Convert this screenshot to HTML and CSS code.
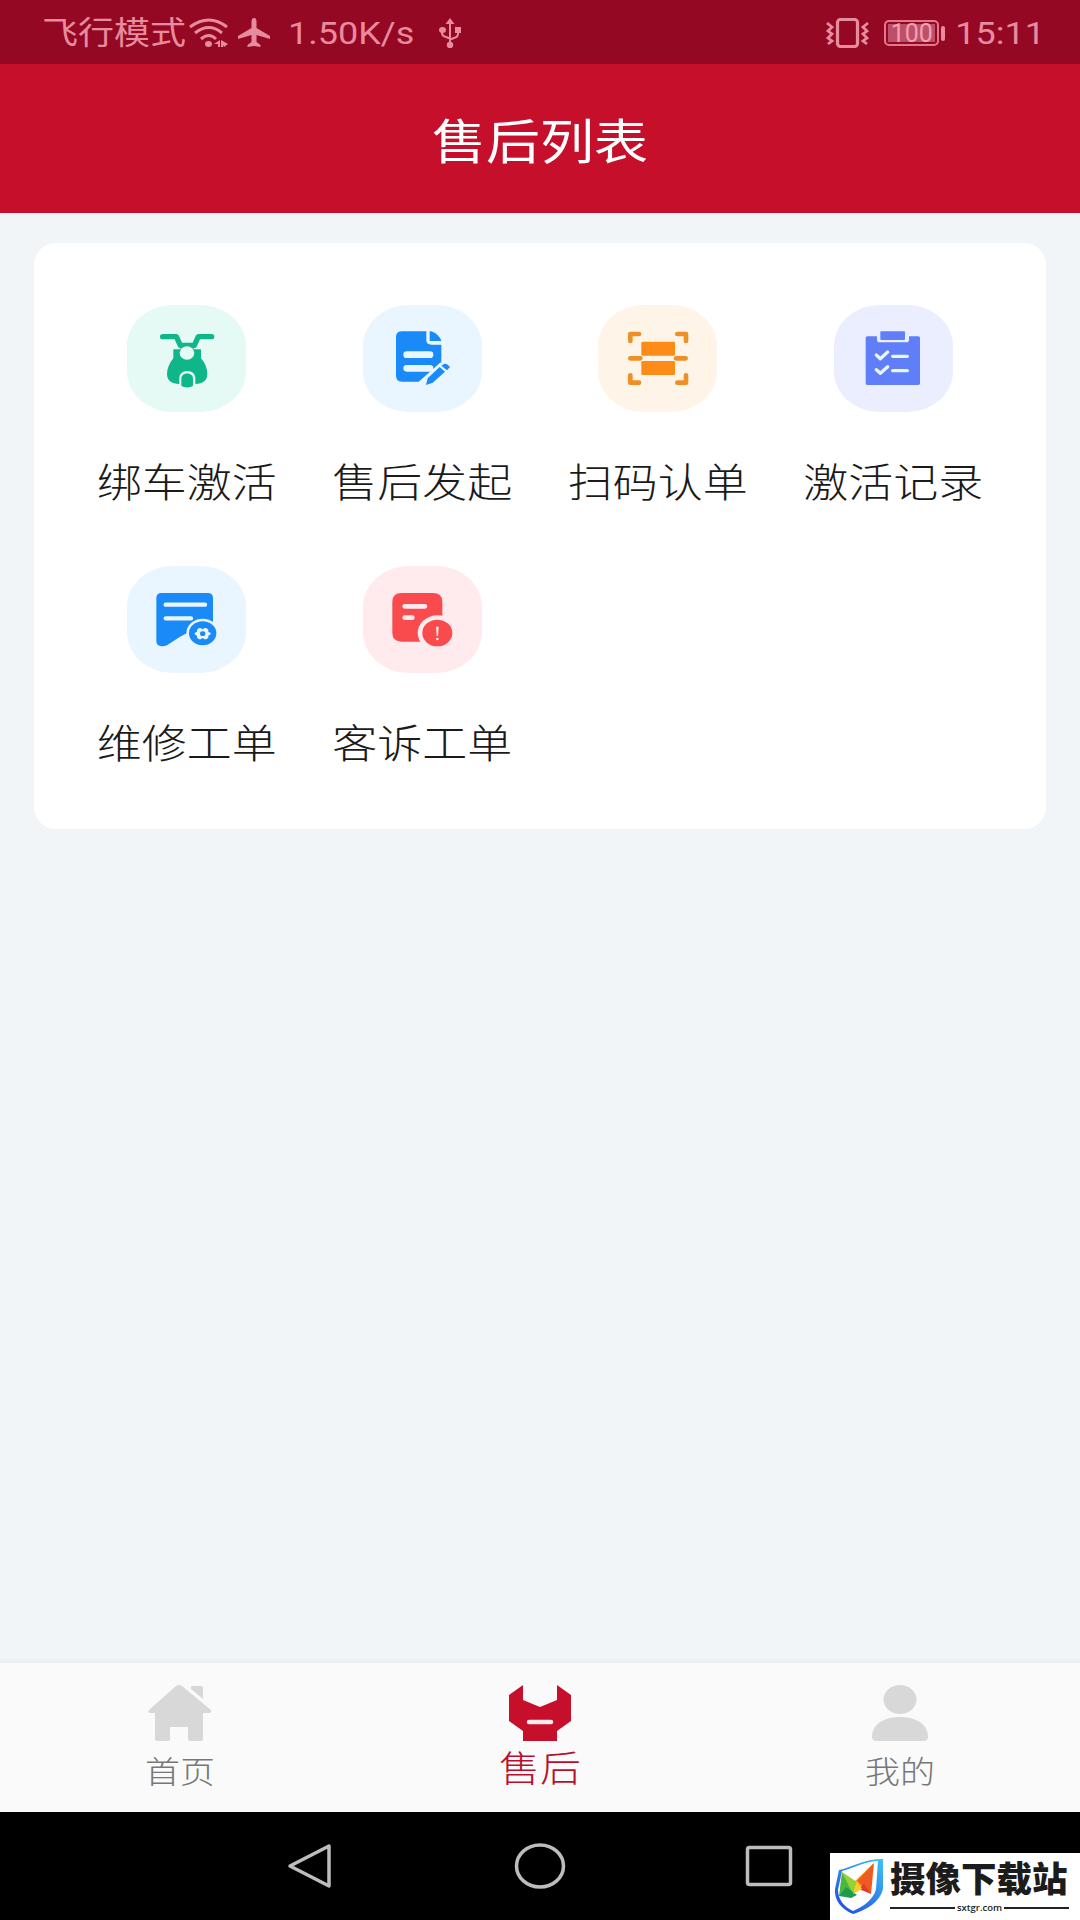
FILE: index.html
```html
<!DOCTYPE html>
<html lang="zh-CN">
<head>
    <meta charset="UTF-8">
    <meta name="viewport" content="width=device-width, initial-scale=1.0">
    <title>售后列表</title>
    <link rel="stylesheet" href="styles.css">
</head>
<body>
    <div class="status-bar">
        <div class="status-left">
            <span class="text">飞行模式</span>
            <svg class="wifi" viewBox="0 0 40 30">
                <g fill="none" stroke="currentColor" stroke-width="3">
                    <path d="M1 9Q20-5 38 9"/>
                    <path d="M6 15Q20 4 33 15"/>
                    <path d="M12 21Q20 14 27 21"/>
                </g>
                <ellipse cx="19.500" cy="26" rx="3.500" ry="3"/>
                <path d="M25 26l6-4v7h-2v-3zM32 22l7 4-4 3v-2l-1 2h-2z"/>
            </svg>
            <svg class="plane" viewBox="0 0 34 30">
                <path d="M17 0c2 0 2.500 2 2.500 4v6L33 18v3l-13.500-4v7l4 3v2L17 28l-6.500 1v-2l4-3v-7L1 21v-3l13.500-8V4c0-2 .5-4 2.500-4z"/>
            </svg>
            <span class="text speed">1.50K/s</span>
            <svg class="usb" viewBox="0 0 24 30">
                <path d="M12 0l4.500 6h-9zM1 12a3.500 3 0 1 1 7 0 3.500 3 0 1 1-7 0zM17 9h6v6h-6z"/>
                <circle cx="12" cy="27" r="3.200"/>
                <path d="M12 4v22M4 12v3q0 3 4 4l4 1.500M20 13v3q0 3-4 4l-4 1.500" fill="none" stroke="currentColor" stroke-width="2"/>
            </svg>
        </div>
        <div class="status-right">
            <svg class="vibrate" viewBox="0 0 44 30">
                <rect x="11.500" y="1.500" width="20" height="27" rx="3" fill="none" stroke="currentColor" stroke-width="3.200"/>
                <path d="M1 5l5 4-4 4 4 3-4 4 4 3-4 3M42 5l-5 4 4 4-4 3 4 4-4 3 4 3" fill="none" stroke="currentColor" stroke-width="2.800"/>
            </svg>
            <div class="battery"><span>100</span></div>
            <span class="text">15:11</span>
        </div>
    </div>

    <header class="header">
        <h1 class="text">售后列表</h1>
    </header>

    <main class="main">
        <div class="card">
            <a class="item">
                <svg class="icon green" viewBox="140 45 357 321">
                    <path d="M247 140h41l12 26h42l12-26h40" fill="none" stroke="#0fb68a" stroke-width="16" stroke-linecap="round" stroke-linejoin="round"/>
                    <path d="M279 178h20l10-15h23l10 15h20v27c12 14 19 30 19 47 0 20-14 29-36 30v-18c0-28-48-28-48 0v18c-23-1-37-10-37-30 0-17 8-33 19-47z" fill="#0fb68a"/>
                    <ellipse cx="320" cy="189" rx="22" ry="20" fill="#e5f9f5"/>
                    <path d="M303 266c0-21 35-21 35 0v20c-6 9-29 9-35 0z" fill="#0fb68a"/>
                </svg>
                <span class="text">绑车激活</span>
            </a>
            <a class="item">
                <svg class="icon blue" viewBox="128 45 357 321">
                    <path d="M245 124h73v26q0 14 15 14h30v62l-64 49h-54q-18 0-18-17V141q0-17 18-17z" fill="#1a8af8"/>
                    <path d="M328 124q14 1 24 12 10 9 11 17h-35z" fill="#1a8af8"/>
                    <path d="M259 194h70M259 235h70" stroke="#e9f5ff" stroke-width="20" stroke-linecap="round"/>
                    <path d="M300 281l66-59" stroke="#e9f5ff" stroke-width="15"/>
                    <path d="M317 285l5-20 36-34 16 14-37 33zM363 227l9-6q9-1 17 10l-9 10z" fill="#1a8af8"/>
                </svg>
                <span class="text">售后发起</span>
            </a>
            <a class="item">
                <svg class="icon orange" viewBox="113 45 357 321">
                    <path d="M210 153v-21h26M351 132h26v21M210 256v22h26M351 278h26v-22" fill="none" stroke="#ee9027" stroke-width="14" stroke-linecap="round" stroke-linejoin="round"/>
                    <path d="M210 205h30M347 205h29" stroke="#ee9027" stroke-width="14" stroke-linecap="round"/>
                    <rect x="243" y="155" width="101" height="42" rx="4" fill="#fd8b17"/>
                    <rect x="243" y="213" width="101" height="42" rx="4" fill="#fd8b17"/>
                </svg>
                <span class="text">扫码认单</span>
            </a>
            <a class="item">
                <svg class="icon purple" viewBox="132 45 357 321">
                    <path d="M232 139h29v10q0 8 8 8h80q8 0 8-8v-10h28q5 0 5 5v136q0 5-5 5H232q-5 0-5-5V144q0-5 5-5z" fill="#5f7ef7"/>
                    <rect x="271" y="124" width="74" height="26" rx="3" fill="#5f7ef7"/>
                    <path d="M259 195l12 11 22-20M259 239l12 11 22-20M308 199h44M308 242h44" fill="none" stroke="#e9f5ff" stroke-width="10" stroke-linecap="round" stroke-linejoin="round"/>
                </svg>
                <span class="text">激活记录</span>
            </a>
            <a class="item">
                <svg class="icon blue" viewBox="142 47 357 321">
                    <path d="M246 128h138q16 0 16 15v103h-64q-22 4-36 14l-38 25q-15 6-26 0-6-4-6-12V143q0-15 16-15z" fill="#1a8af8"/>
                    <path d="M258 163h118M258 204h76" stroke="#e9f5ff" stroke-width="13" stroke-linecap="round"/>
                    <ellipse cx="369" cy="249" rx="49" ry="44" fill="#e9f5ff"/>
                    <ellipse cx="369" cy="249" rx="41" ry="36" fill="#1a8af8"/>
                    <path d="M358 233h5l6 4 6-4h5l6 5v6l7 4v4l-7 4v6l-6 5h-5l-6-4-6 4h-5l-6-5v-6l-7-4v-4l7-4v-6z" fill="#e9f5ff"/>
                    <ellipse cx="369" cy="250" rx="8" ry="7" fill="#1a8af8"/>
                </svg>
                <span class="text">维修工单</span>
            </a>
            <a class="item">
                <svg class="icon red" viewBox="850 47 357 321">
                    <path d="M966 128h94q28 0 28 26v90l-45 30h-77q-28 0-28-26v-94q0-26 28-26z" fill="#f94a4d"/>
                    <path d="M975 168h61M975 202h23" stroke="#ffebed" stroke-width="14" stroke-linecap="round"/>
                    <ellipse cx="1073" cy="248" rx="59" ry="53" fill="#ffebed"/>
                    <ellipse cx="1073" cy="248" rx="45" ry="40" fill="#f94a4d"/>
                    <path d="M1069 229h8l-2 28h-4z" fill="#ffebed"/>
                    <ellipse cx="1073" cy="266" rx="4" ry="4" fill="#ffebed"/>
                </svg>
                <span class="text">客诉工单</span>
            </a>
        </div>
    </main>

    <nav class="tab-bar">
        <a class="tab">
            <svg class="tab-icon" viewBox="0 0 64 56">
                <path d="M28 1q3-2 6 0l29 24q1 3-2 3h-6v26q0 2-2 2H42q-2 0-2-2V42H22v12q0 2-2 2H9q-2 0-2-2V28H2q-3 0-1-3z"/>
                <path d="M43 1h10q2 0 2 2v11L43 4z"/>
            </svg>
            <span class="text">首页</span>
        </a>
        <a class="tab active">
            <svg class="tab-icon" viewBox="0 0 64 56">
                <path d="M15 0v15l17 7 17-7V0l14 10v26L49 46v10H15V46L1 36V10z"/>
                <path d="M21 37h22" stroke="#fde8ec" stroke-width="4.500" stroke-linecap="round"/>
            </svg>
            <span class="text">售后</span>
        </a>
        <a class="tab">
            <svg class="tab-icon" viewBox="0 0 64 56">
                <ellipse cx="32" cy="14.500" rx="16.500" ry="14.500"/>
                <path d="M4 52C4 39 16 32 32 32s28 7 28 20q0 4-5 4H9q-5 0-5-4z"/>
            </svg>
            <span class="text">我的</span>
        </a>
    </nav>

    <div class="system-nav">
        <svg viewBox="0 0 48 48"><path d="M3 24L42 4v40z"/></svg>
        <svg viewBox="0 0 52 48"><ellipse cx="26" cy="24" rx="23.500" ry="21"/></svg>
        <svg viewBox="0 0 48 48"><rect x="2.500" y="5.500" width="43" height="37" rx="2"/></svg>
    </div>

    <div class="watermark">
        <svg class="shield" viewBox="0 0 50 58">
            <defs>
                <linearGradient id="shield" x1="1" y1="0" x2=".3" y2="1">
                    <stop offset="0" stop-color="#3cc4f4"/>
                    <stop offset="1" stop-color="#2452e8"/>
                </linearGradient>
            </defs>
            <path fill="url(#shield)" fill-rule="evenodd" d="M49 1v29C47 43 33 52 19 56 7 51 0 42 1 31L5 12C19 9 29 1 49 1zM44 3C29 4 20 10 8 13L4 32c0 9 6 17 15 21 10-4 21-12 23-22z"/>
            <path d="M8 14l15 10-4 14z" fill="#95d137"/>
            <path d="M8 14L5 38l14-2z" fill="#49b83d"/>
            <path d="M5 38l7-9 11 8-6 3z" fill="#1d9c50"/>
            <path d="M40 5L21 23l7 10z" fill="#f9a020"/>
            <path d="M40 5l-3 31-14-13z" fill="#ed5a22"/>
            <path d="M37 36l-12-5 5-5z" fill="#e33b26"/>
            <path d="M23 23l-4 13 9-5z" fill="#f8cc2b"/>
        </svg>
        <div class="brand">
            <div class="brand-name">摄像下载站</div>
            <div class="brand-url">sxtgr.com</div>
        </div>
    </div>
</body>
</html>
```

FILE: styles.css
```css
* {
    box-sizing: border-box;
}

body {
    margin: 0;
    height: 1920px;
    display: flex;
    flex-direction: column;
    position: relative;
    overflow: hidden;
    background: #f1f5f8;
    font-family: Roboto, 'Noto Sans CJK SC', sans-serif;
    color: #1a1a1a;
}

svg {
    display: block;
    fill: currentColor;
    flex: none;
}

/* 文字略微压扁 */
.text {
    display: block;
    transform: scaleY(0.89);
    white-space: nowrap;
}

/* 状态栏 */
.status-bar {
    height: 64px;
    padding: 2px 35px 0 42px;
    background: #940824;
    color: #e68c9e;
    display: flex;
    justify-content: space-between;
    align-items: center;
    font-size: 36px;
    line-height: 40px;
}

.status-left,
.status-right {
    display: flex;
    align-items: center;
}

.wifi {
    width: 40px;
    height: 30px;
    margin-left: 3px;
}

.plane {
    width: 34px;
    height: 30px;
    margin-left: 8px;
}

.speed {
    margin-left: 17px;
}

.usb {
    width: 24px;
    height: 30px;
    margin-left: 24px;
}

.vibrate {
    width: 44px;
    height: 30px;
}

.battery {
    width: 55px;
    height: 26px;
    margin: 0 16px 0 14px;
    padding: 2px;
    border: 2px solid #e0798c;
    border-radius: 5px;
    position: relative;
}

.battery span {
    display: block;
    height: 18px;
    background: #bd5068;
    color: #f3a0b0;
    font-size: 25px;
    line-height: 19px;
    text-align: center;
}

.battery::after {
    content: '';
    position: absolute;
    right: -8px;
    top: 4px;
    width: 4px;
    height: 15px;
    border-radius: 2px;
    background: #e68c9e;
}

/* 标题 */
.header {
    height: 149px;
    padding-top: 9px;
    background: #c6102b;
    color: #fff;
    display: flex;
    justify-content: center;
    align-items: center;
}

.header h1 {
    margin: 0;
    font-size: 54px;
    font-weight: 400;
    line-height: 60px;
}

/* 功能入口 */
.main {
    flex: 1;
    padding: 30px 34px;
}

.card {
    height: 586px;
    padding: 62px 35px 0;
    background: #fff;
    border-radius: 22px;
    display: grid;
    grid-template-columns: repeat(4, 1fr);
    grid-auto-rows: 261px;
    align-content: start;
}

.item {
    display: flex;
    flex-direction: column;
    align-items: center;
    font-size: 45px;
    font-weight: 300;
    line-height: 60px;
}

.icon {
    width: 119px;
    height: 107px;
    margin-bottom: 42px;
    border-radius: 46px / 41px;
}

.green {
    background: #e5f9f5;
}

.blue {
    background: #e9f5ff;
}

.orange {
    background: #fff4e8;
}

.purple {
    background: #ebeeff;
}

.red {
    background: #ffebed;
}

/* 底部标签 */
.tab-bar {
    height: 153px;
    padding-top: 22px;
    border-top: 4px solid #eaeff4;
    background: #fafafa;
    display: grid;
    grid-template-columns: repeat(3, 1fr);
}

.tab {
    display: flex;
    flex-direction: column;
    align-items: center;
    color: #777;
    font-size: 35px;
    font-weight: 300;
    line-height: 63px;
}

.tab-icon {
    width: 64px;
    height: 56px;
    color: #d8d8d8;
}

.tab.active {
    color: #b80f2c;
    font-size: 41px;
    line-height: 57px;
}

.active .tab-icon {
    color: #c6102b;
}

/* 系统导航键 */
.system-nav {
    height: 108px;
    padding: 0 287px;
    background: #000;
    display: flex;
    justify-content: space-between;
    align-items: center;
}

.system-nav svg {
    height: 48px;
    fill: none;
    stroke: #bdbdbd;
    stroke-width: 3.5;
    stroke-linejoin: round;
}

/* 右下角水印 */
.watermark {
    position: absolute;
    right: 0;
    bottom: 0;
    width: 250px;
    height: 67px;
    padding: 5px 11px 0 4px;
    background: #fff;
    display: flex;
    color: #1c1c1c;
}

.shield {
    width: 50px;
    height: 58px;
}

.brand {
    flex: 1;
    margin-left: 6px;
}

.brand-name {
    font-family: 'Noto Sans CJK SC', sans-serif;
    font-size: 35.5px;
    font-weight: 900;
    line-height: 37px;
    height: 43px;
    white-space: nowrap;
}

.brand-url {
    display: flex;
    align-items: center;
    gap: 2px;
    font-family: 'Open Sans', sans-serif;
    font-size: 9.5px;
    font-weight: 600;
    line-height: 14px;
}

.brand-url::before,
.brand-url::after {
    content: '';
    flex: 1;
    height: 2px;
    background: #222;
}
```
